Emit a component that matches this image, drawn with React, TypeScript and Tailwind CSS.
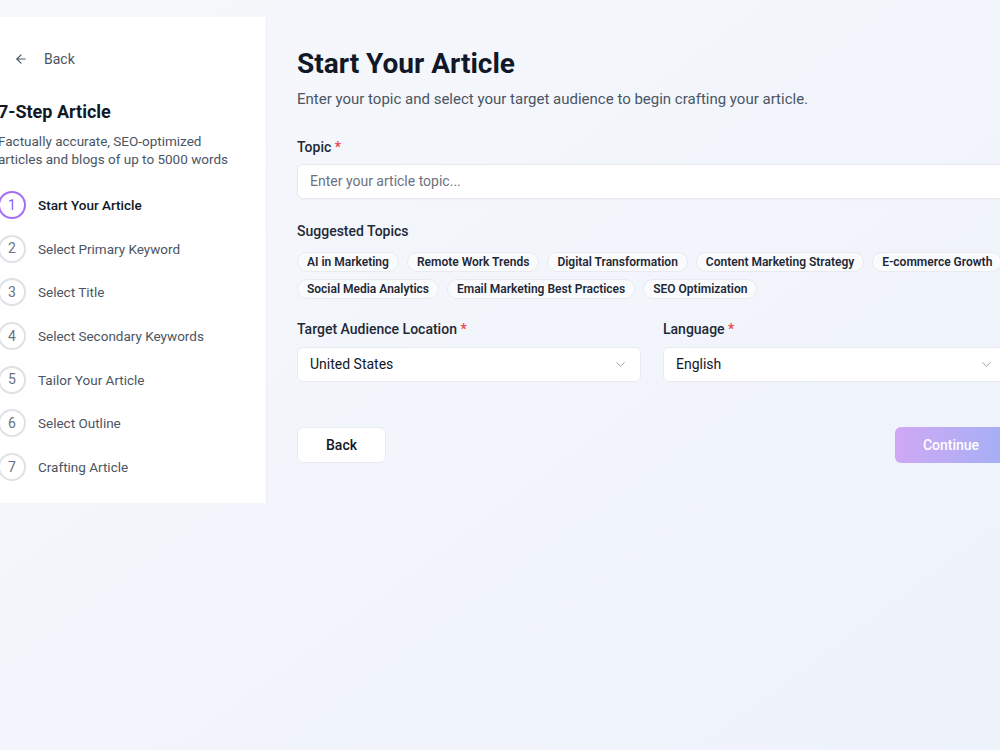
import React from "react";

const steps = [
  "Start Your Article",
  "Select Primary Keyword",
  "Select Title",
  "Select Secondary Keywords",
  "Tailor Your Article",
  "Select Outline",
  "Crafting Article",
];

const topics1 = [
  "AI in Marketing",
  "Remote Work Trends",
  "Digital Transformation",
  "Content Marketing Strategy",
  "E-commerce Growth",
];
const topics2 = ["Social Media Analytics", "Email Marketing Best Practices", "SEO Optimization"];

function Chevron() {
  return (
    <svg width="15" height="15" viewBox="0 0 24 24" fill="none" stroke="#9ca3af" strokeWidth="1.6" strokeLinecap="round" strokeLinejoin="round">
      <path d="m6 9 6 6 6-6" />
    </svg>
  );
}

function Chip({ t }: { t: string }) {
  return (
    <span className="inline-flex h-[20px] shrink-0 items-center whitespace-nowrap rounded-full border border-[#e8eaef] bg-[#fafbfc] px-[9px] text-[12px] font-semibold text-[#1f2937]">
      {t}
    </span>
  );
}

export default function App() {
  return (
    <div
      className="min-h-screen w-full overflow-hidden bg-gradient-to-br from-[#f6f8fb] to-[#eef2fb]"
      style={{ fontFamily: "Roboto, 'Noto Sans', sans-serif" }}
    >
      <div className="flex items-start pt-[17px]">
        <aside className="-ml-[26px] w-[293px] shrink-0 border-r border-[#eceef2] bg-white pb-[22px] pl-6 pr-6">
          <button className="mt-[32px] flex items-center gap-[16px] pl-4 text-[14px] leading-[20px] text-[#4b5563]">
            <svg width="14" height="14" viewBox="0 0 24 24" fill="none" stroke="#4b5563" strokeWidth="2" strokeLinecap="round" strokeLinejoin="round">
              <path d="m12 19-7-7 7-7" />
              <path d="M19 12H5" />
            </svg>
            <span>Back</span>
          </button>
          <h2 className="mt-[31px] text-[18px] font-bold leading-[24px] text-[#111827]">7-Step Article</h2>
          <p className="mt-[8px] text-[13.5px] leading-[18px] text-[#4b5563]">
            Factually accurate, SEO-optimized articles and blogs of up to 5000 words
          </p>
          <ul className="mt-[23px] flex flex-col gap-[15.7px]">
            {steps.map((s, i) => (
              <li key={s} className="flex items-center gap-[12px]">
                <span
                  className={
                    i === 0
                      ? "flex h-[28px] w-[28px] items-center justify-center rounded-full border-2 border-[#a56ef2] text-[14px] text-[#8b5cf6]"
                      : "flex h-[28px] w-[28px] items-center justify-center rounded-full border-2 border-[#dfe1e6] text-[14px] text-[#6b7280]"
                  }
                >
                  {i + 1}
                </span>
                <span className={i === 0 ? "text-[13.5px] font-medium text-[#111827]" : "text-[13.5px] text-[#4b5563]"}>{s}</span>
              </li>
            ))}
          </ul>
        </aside>
        <main className="ml-[30px] w-[710px] shrink-0 pt-[29px]">
          <h1 className="text-[28px] font-bold leading-[36px] text-[#111827]">Start Your Article</h1>
          <p className="mt-[5px] text-[15px] leading-[24px] text-[#4b5563]">
            Enter your topic and select your target audience to begin crafting your article.
          </p>
          <label className="mt-[26px] block text-[14px] font-medium leading-[20px] text-[#1f2937]">
            Topic <span className="text-[#ef4444]">*</span>
          </label>
          <div className="mt-[7px] flex h-[35px] items-center rounded-md border border-[#e8eaef] bg-white px-3 text-[14px] text-[#6b7280] shadow-[0_1px_2px_rgba(0,0,0,0.03)]">
            Enter your article topic...
          </div>
          <div className="mt-[22px] text-[14px] font-medium leading-[20px] text-[#1f2937]">Suggested Topics</div>
          <div className="mt-[11px] flex flex-col gap-[7px]">
            <div className="flex gap-[8px]">
              {topics1.map((t) => (
                <Chip key={t} t={t} />
              ))}
            </div>
            <div className="flex gap-[8px]">
              {topics2.map((t) => (
                <Chip key={t} t={t} />
              ))}
            </div>
          </div>
          <div className="mt-[20px] grid grid-cols-2 gap-[22px]">
            <div>
              <label className="block text-[14px] font-medium leading-[20px] text-[#1f2937]">
                Target Audience Location <span className="text-[#ef4444]">*</span>
              </label>
              <div className="mt-[8px] flex h-[35px] items-center justify-between rounded-md border border-[#e8eaef] bg-white pl-3 pr-[12px] text-[14px] text-[#111827]">
                <span>United States</span>
                <Chevron />
              </div>
            </div>
            <div>
              <label className="block text-[14px] font-medium leading-[20px] text-[#1f2937]">
                Language <span className="text-[#ef4444]">*</span>
              </label>
              <div className="mt-[8px] flex h-[35px] items-center justify-between rounded-md border border-[#e8eaef] bg-white pl-3 pr-[12px] text-[14px] text-[#111827]">
                <span>English</span>
                <Chevron />
              </div>
            </div>
          </div>
          <div className="mt-[45px] flex items-center justify-between">
            <button className="h-[36px] w-[89px] rounded-md border border-[#e8eaef] bg-white text-[14px] font-medium text-[#111827]">
              Back
            </button>
            <button className="h-[36px] w-[112px] rounded-md bg-gradient-to-r from-[#cfa8f4] to-[#a3b0f5] text-[14px] font-medium text-white">
              Continue
            </button>
          </div>
        </main>
      </div>
    </div>
  );
}
